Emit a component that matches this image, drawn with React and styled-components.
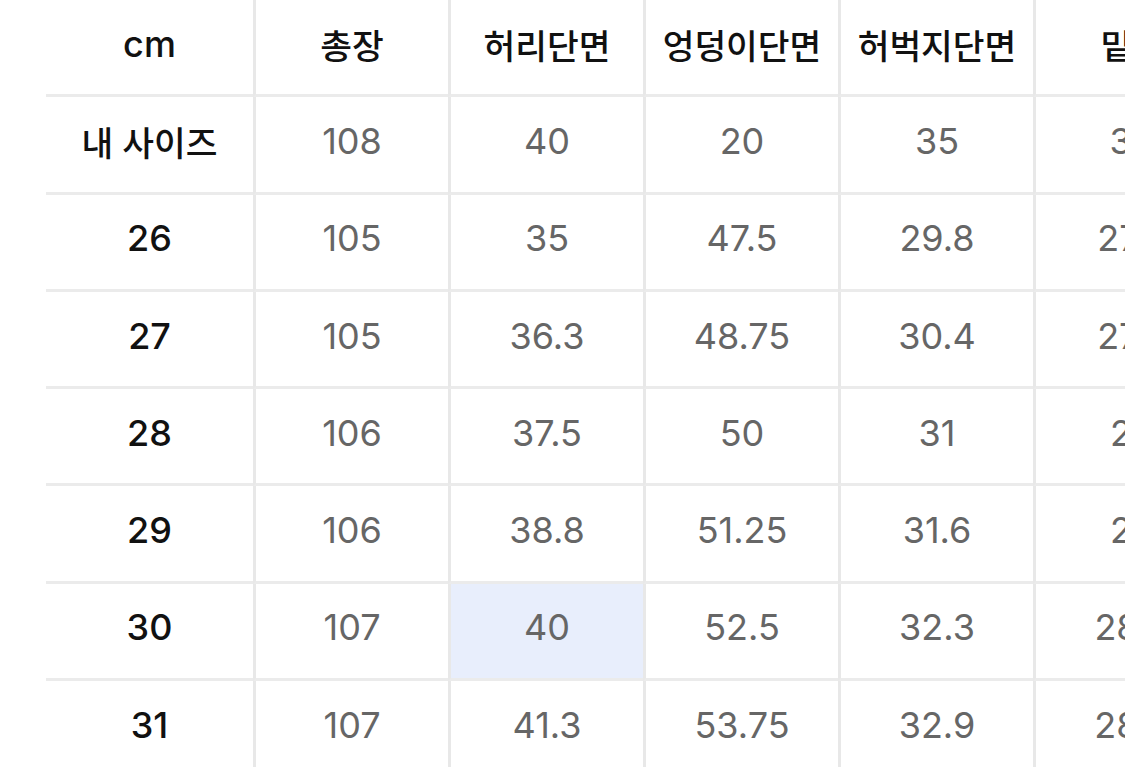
import styled, { createGlobalStyle } from "styled-components";

const GlobalStyle = createGlobalStyle`
  html, body {
    margin: 0;
    padding: 0;
    background: #ffffff;
    overflow: hidden;
  }
`;

const Page = styled.div`
  width: 1125px;
  height: 767px;
  overflow: hidden;
  padding-left: 46px;
  box-sizing: border-box;
`;

const Grid = styled.div`
  display: grid;
  grid-template-columns: 207px repeat(5, 195px);
  grid-auto-rows: 97.3px;
  width: max-content;
  font-family: "Inter", "Noto Sans CJK KR", sans-serif;
`;

const Cell = styled.div`
  display: flex;
  align-items: center;
  justify-content: center;
  box-sizing: border-box;
  white-space: nowrap;
  border-bottom: 3px solid #ebebeb;
  border-left: ${(p) => (p.$first ? "none" : "3px solid #e8e8e8")};
  background: ${(p) => (p.$hl ? "#e8eefc" : "#ffffff")};
  color: ${(p) => (p.$dark ? "#111111" : "#666666")};
  font-weight: ${(p) => (p.$dark ? 500 : 400)};
  font-size: ${(p) => (p.$ko ? "34.5px" : "36px")};
  padding-bottom: 7px;
`;

const headers = ["cm", "총장", "허리단면", "엉덩이단면", "허벅지단면", "밑위"];

const rows = [
  ["내 사이즈", "108", "40", "20", "35", "30"],
  ["26", "105", "35", "47.5", "29.8", "27.5"],
  ["27", "105", "36.3", "48.75", "30.4", "27.8"],
  ["28", "106", "37.5", "50", "31", "28"],
  ["29", "106", "38.8", "51.25", "31.6", "28"],
  ["30", "107", "40", "52.5", "32.3", "28.5"],
  ["31", "107", "41.3", "53.75", "32.9", "28.8"],
];

const isKorean = (s) => /[\uac00-\ud7a3]/.test(s);

export default function App() {
  return (
    <Page>
      <GlobalStyle />
      <Grid>
        {headers.map((h, i) => (
          <Cell key={h} $first={i === 0} $dark $ko={isKorean(h)}>
            {h}
          </Cell>
        ))}
        {rows.map((row, r) =>
          row.map((v, c) => (
            <Cell
              key={`${r}-${c}`}
              $first={c === 0}
              $dark={c === 0}
              $ko={isKorean(v)}
              $hl={r === 5 && c === 2}
            >
              {v}
            </Cell>
          ))
        )}
      </Grid>
    </Page>
  );
}
